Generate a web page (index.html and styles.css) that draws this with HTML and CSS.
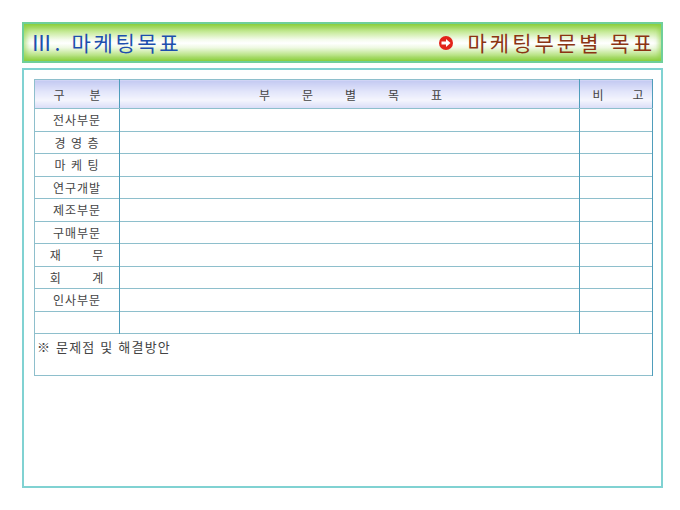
FILE: index.html
```html
<!DOCTYPE html>
<html lang="ko">
<head>
<meta charset="utf-8">
<link rel="stylesheet" href="styles.css">
</head>
<body>
<div class="page">
  <header class="titlebar">
    <h1 class="title">Ⅲ. 마케팅목표</h1>
    <div class="subtitle">
      <svg class="arrow-icon" width="14" height="14" viewBox="0 0 14 14">
        <circle cx="7" cy="7" r="7" fill="#e2231a"/>
        <path d="M2.5 5.6 H7 V3 L11.5 7 L7 11 V8.4 H2.5 Z" fill="#fff"/>
      </svg>
      <span>마케팅부문별 목표</span>
    </div>
  </header>
  <section class="panel">
    <table class="grid">
      <colgroup>
        <col class="c1"><col class="c2"><col class="c3">
      </colgroup>
      <thead>
        <tr>
          <th class="h-gubun"><span class="sp">구분</span></th>
          <th class="h-goal"><span class="sp">부문별목표</span></th>
          <th class="h-note"><span class="sp">비고</span></th>
        </tr>
      </thead>
      <tbody>
        <tr><td class="label">전사부문</td><td></td><td></td></tr>
        <tr><td class="label">경 영 층</td><td></td><td></td></tr>
        <tr><td class="label">마 케 팅</td><td></td><td></td></tr>
        <tr><td class="label">연구개발</td><td></td><td></td></tr>
        <tr><td class="label">제조부문</td><td></td><td></td></tr>
        <tr><td class="label">구매부문</td><td></td><td></td></tr>
        <tr><td class="label">재&nbsp;&nbsp;&nbsp;&nbsp;&nbsp;&nbsp;&nbsp;무</td><td></td><td></td></tr>
        <tr><td class="label">회&nbsp;&nbsp;&nbsp;&nbsp;&nbsp;&nbsp;&nbsp;계</td><td></td><td></td></tr>
        <tr><td class="label">인사부문</td><td></td><td></td></tr>
        <tr><td class="label"></td><td></td><td></td></tr>
        <tr class="memo"><td colspan="3">※ 문제점 및 해결방안</td></tr>
      </tbody>
    </table>
  </section>
</div>
</body>
</html>
```

FILE: styles.css
```css
html, body {
  margin: 0;
  padding: 0;
  background: #fff;
}

body {
  font-family: "Noto Sans CJK KR", "Noto Sans", sans-serif;
  color: #333;
}

.page {
  width: 641px;
  padding: 22px 0 0 22px;
  display: flex;
  flex-direction: column;
  gap: 5px;
}

.titlebar {
  box-sizing: border-box;
  height: 41px;
  border: 2px solid #6fcf9a;
  background:
    linear-gradient(to bottom, #8dd03f 0%, #c8eb9c 22%, #f4fbec 42%, #ffffff 52%, #eef9e2 64%, #bfe690 82%, #8dd03f 100%);
  box-shadow: inset 3px 0 4px rgba(140, 208, 63, 0.5), inset -3px 0 4px rgba(140, 208, 63, 0.5);
  display: flex;
  align-items: center;
  justify-content: space-between;
  padding: 0 6px 0 7px;
}

.title {
  margin: 0;
  font-size: 21px;
  font-weight: normal;
  color: #1d4fae;
  letter-spacing: 2.6px;
  line-height: 1;
}

.subtitle {
  display: flex;
  align-items: center;
  gap: 15px;
  font-size: 21px;
  color: #8b3413;
  letter-spacing: 3px;
  line-height: 1;
}

.arrow-icon {
  display: block;
}

.panel {
  box-sizing: border-box;
  height: 420px;
  border: 2px solid #80d2d2;
  padding: 9px 9px 0 10px;
}

.grid {
  width: 618px;
  border-collapse: collapse;
  table-layout: fixed;
  font-size: 12px;
  border: 1px solid #8ebfcc;
}

.c1 { width: 85px; }
.c2 { width: 460px; }
.c3 { width: 73px; }

.grid th {
  height: 28px;
  padding: 0;
  font-weight: normal;
  color: #444;
  white-space: nowrap;
  background: linear-gradient(to bottom, #c3c9f2 0%, #e2e5fa 40%, #f4f5fd 70%, #d9dcf7 100%);
  border-bottom: 1px solid #8ebfcc;
  border-right: 1px solid #4f9dbb;
  text-align: center;
}

.grid th .sp {
  display: inline-block;
}

.grid th.h-gubun { padding-left: 0; }
.grid th.h-gubun .sp {
  letter-spacing: 25px;
  margin-right: -25px;
}

.grid th.h-goal { padding-left: 2px; }
.grid th.h-goal .sp {
  letter-spacing: 32px;
  margin-right: -32px;
}

.grid th.h-note { padding-left: 4px; }
.grid th.h-note .sp {
  letter-spacing: 29px;
  margin-right: -29px;
}

.grid td {
  height: 21.5px;
  padding: 0;
  white-space: nowrap;
  border-top: 1px solid #8ebfcc;
  border-right: 1px solid #4f9dbb;
  color: #444;
}

.grid td.label {
  text-align: center;
  letter-spacing: 1px;
}

.grid .memo td {
  height: 42px;
  vertical-align: top;
  padding: 3px 0 0 2px;
  box-sizing: border-box;
  font-size: 13px;
  letter-spacing: 1.2px;
}
```
